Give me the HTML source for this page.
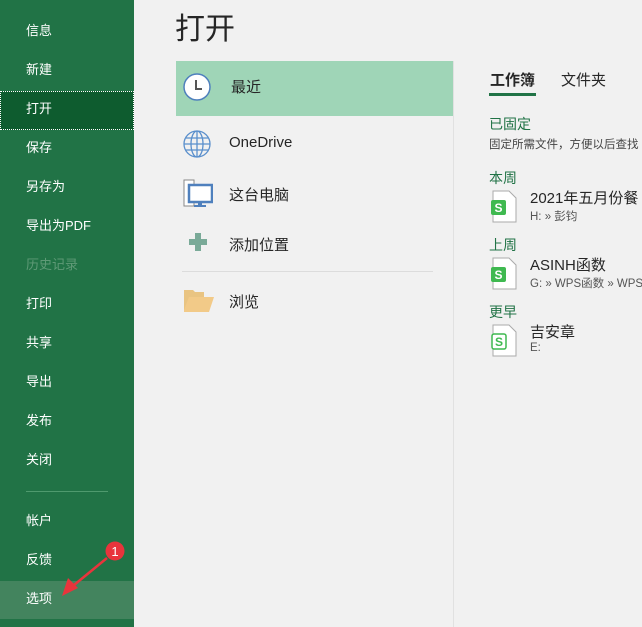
<!DOCTYPE html>
<html><head><meta charset="utf-8"><style>
*{margin:0;padding:0;box-sizing:border-box}
body{width:642px;height:627px;overflow:hidden;background:#f1f1f1;font-family:"Liberation Sans","Noto Sans CJK SC",sans-serif;position:relative;color:#262626}
.sb{position:absolute;left:0;top:0;width:134px;height:627px;background:#217346}
.sb div{position:absolute;left:26px;color:#fff;font-size:13px;line-height:16px}
.a{position:absolute}
.t{position:absolute;white-space:nowrap}
</style></head><body>
<div class="sb">
<div style="top:23px">信息</div>
<div style="top:62px">新建</div>
<div style="left:0;top:91px;width:134px;height:39px;background:#0e5c2f;border:1px dotted #fff"></div>
<div style="top:101px">打开</div>
<div style="top:140px">保存</div>
<div style="top:179px">另存为</div>
<div style="top:218px">导出为PDF</div>
<div style="top:257px;color:#5f9a77">历史记录</div>
<div style="top:296px">打印</div>
<div style="top:335px">共享</div>
<div style="top:374px">导出</div>
<div style="top:413px">发布</div>
<div style="top:452px">关闭</div>
<div style="top:491px;height:1px;width:82px;background:#4f9a6e"></div>
<div style="top:513px">帐户</div>
<div style="top:552px">反馈</div>
<div style="left:0;top:581px;width:134px;height:38px;background:#43845e"></div>
<div style="top:591px">选项</div>
</div>
<svg class="a" style="left:60px;top:540px" width="70" height="60"><circle cx="55" cy="11" r="9.5" fill="#e8343c"/><text x="55" y="16" fill="#fff" font-size="13" text-anchor="middle" font-family="Liberation Sans">1</text><line x1="47" y1="18" x2="8" y2="50" stroke="#e8343c" stroke-width="2.5"/><polygon points="2,56 8,38 18,48" fill="#e8343c"/></svg>
<div class="t" style="left:175px;top:4px;font-size:30px;color:#262626">打开</div>
<div class="a" style="left:176px;top:61px;width:277px;height:55px;background:#9fd5b7"></div>
<div class="a" style="left:453px;top:61px;width:1px;height:566px;background:#e1e1e1"></div>
<svg class="a" style="left:183px;top:73px" width="30" height="30"><circle cx="14" cy="14" r="13" fill="#fff" stroke="#4f80bd" stroke-width="1.5"/><path d="M13 7v9h6" stroke="#555" stroke-width="2" fill="none"/></svg>
<div class="t" style="left:231px;top:76px;font-size:15px">最近</div>
<svg class="a" style="left:183px;top:130px" width="30" height="30"><g fill="none" stroke="#5a8fcc" stroke-width="1.3"><circle cx="14" cy="14" r="13"/><ellipse cx="14" cy="14" rx="6" ry="13"/><line x1="14" y1="1" x2="14" y2="27"/><line x1="1" y1="14" x2="27" y2="14"/><line x1="3" y1="8" x2="25" y2="8"/><line x1="3" y1="20" x2="25" y2="20"/></g></svg>
<div class="t" style="left:229px;top:134px;font-size:15px">OneDrive</div>
<svg class="a" style="left:183px;top:179px" width="30" height="30"><rect x="1" y="1" width="10" height="26" fill="#fff" stroke="#888"/><rect x="6" y="6" width="23" height="17" fill="#fff" stroke="#4f80bd" stroke-width="2.5"/><rect x="15" y="23" width="4" height="3" fill="#4f80bd"/><rect x="11" y="26" width="12" height="2" fill="#4f80bd"/></svg>
<div class="t" style="left:229px;top:184px;font-size:15px">这台电脑</div>
<svg class="a" style="left:189px;top:233px" width="20" height="20"><path d="M6 0h6v6h6v6h-6v6h-6v-6h-6v-6h6z" fill="#7aaa98"/></svg>
<div class="t" style="left:229px;top:234px;font-size:15px">添加位置</div>
<div class="a" style="left:182px;top:271px;width:251px;height:1px;background:#dcdcdc"></div>
<svg class="a" style="left:183px;top:288px" width="32" height="24"><path d="M1 2h9l2 2h9v20H1z" fill="#e9c482"/><path d="M1 22l5-13h25l-5 15H1z" fill="#f2ca88"/></svg>
<div class="t" style="left:229px;top:291px;font-size:15px">浏览</div>
<div class="t" style="left:490px;top:69px;font-size:15px;font-weight:bold">工作簿</div>
<div class="a" style="left:489px;top:93px;width:47px;height:3px;background:#217346"></div>
<div class="t" style="left:561px;top:69px;font-size:15px">文件夹</div>
<div class="t" style="left:489px;top:114px;font-size:14px;color:#217346">已固定</div>
<div class="t" style="left:489px;top:136px;font-size:11.5px;color:#444">固定所需文件，方便以后查找</div>
<div class="t" style="left:489px;top:168px;font-size:14px;color:#217346">本周</div>
<div class="t" style="left:489px;top:235px;font-size:14px;color:#217346">上周</div>
<div class="t" style="left:489px;top:302px;font-size:14px;color:#217346">更早</div>
<svg class="a" style="left:491px;top:190px" width="28" height="34"><path d="M2 1h16l7 7v24H2z" fill="#fff" stroke="#aaa"/><rect x="0" y="10" width="15" height="15" rx="2" fill="#3fb950"/><text x="7.5" y="22" fill="#fff" font-size="12" font-weight="bold" text-anchor="middle" font-family="Liberation Sans">S</text></svg>
<div class="t" style="left:530px;top:187px;font-size:15px">2021年五月份餐</div>
<div class="t" style="left:530px;top:208px;font-size:11.5px;color:#555">H: » 彭钧</div>
<svg class="a" style="left:491px;top:257px" width="28" height="34"><path d="M2 1h16l7 7v24H2z" fill="#fff" stroke="#aaa"/><rect x="0" y="10" width="15" height="15" rx="2" fill="#3fb950"/><text x="7.5" y="22" fill="#fff" font-size="12" font-weight="bold" text-anchor="middle" font-family="Liberation Sans">S</text></svg>
<div class="t" style="left:530px;top:254px;font-size:15px">ASINH函数</div>
<div class="t" style="left:530px;top:275px;font-size:11.5px;color:#555">G: » WPS函数 » WPS</div>
<svg class="a" style="left:491px;top:324px" width="28" height="34"><path d="M2 1h16l7 7v24H2z" fill="#fff" stroke="#aaa"/><rect x="1" y="10" width="14" height="15" rx="2" fill="#fff" stroke="#3fb950" stroke-width="1.5"/><text x="8" y="22" fill="#3fb950" font-size="12" font-weight="bold" text-anchor="middle" font-family="Liberation Sans">S</text></svg>
<div class="t" style="left:530px;top:321px;font-size:15px">吉安章</div>
<div class="t" style="left:530px;top:342px;font-size:11.5px;color:#555">E:</div>
</body></html>
